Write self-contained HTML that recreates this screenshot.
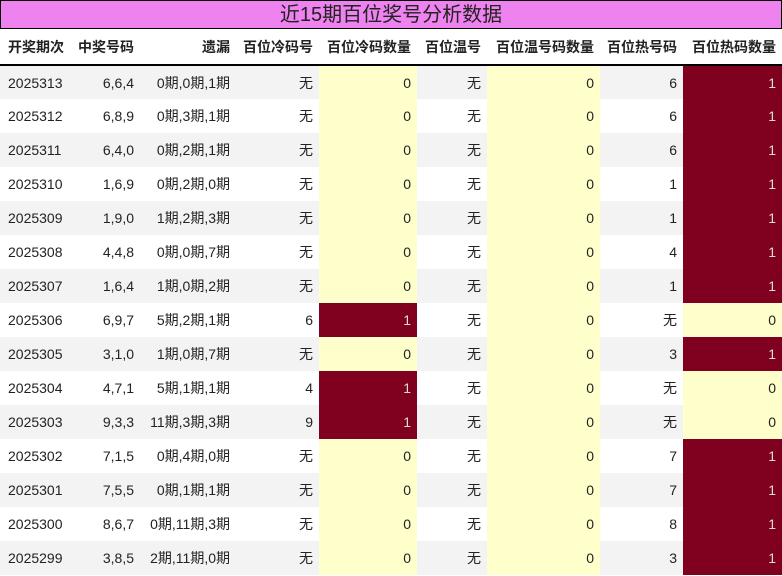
<!DOCTYPE html>
<html><head><meta charset="utf-8"><style>
*{margin:0;padding:0;box-sizing:border-box}
body{width:782px;height:576px;background:#fff;font-family:"Liberation Sans","Noto Sans CJK SC",sans-serif;font-size:14px;color:#222;overflow:hidden}
.title{position:absolute;left:0;top:0;width:782px;height:29px;background:#ee82ee;border:1px solid #000;text-align:center;font-size:20px;line-height:28px;color:#222}
table{position:absolute;left:0;top:29px;border-collapse:collapse;width:782px;table-layout:fixed}
th{height:36px;font-weight:bold;text-align:right;padding-right:6px;border-bottom:2px solid #000;white-space:nowrap}
td{height:34px;text-align:right;padding-right:6px;white-space:nowrap}
th:first-child,td:first-child{text-align:left;padding-left:8px}
tr.g td{background:#f3f3f3}
tr td.y{background:#ffffcc}
tr td.r{background:#800020;color:#ddd}
</style></head><body>
<div class="title">近15期百位奖号分析数据</div>
<table>
<colgroup><col style="width:72px"><col style="width:68px"><col style="width:96px"><col style="width:83px"><col style="width:98px"><col style="width:70px"><col style="width:113px"><col style="width:83px"><col style="width:99px"></colgroup>
<tr><th>开奖期次</th><th>中奖号码</th><th>遗漏</th><th>百位冷码号</th><th>百位冷码数量</th><th>百位温号</th><th>百位温号码数量</th><th>百位热号码</th><th>百位热码数量</th></tr>
<tr class="g"><td>2025313</td><td>6,6,4</td><td>0期,0期,1期</td><td>无</td><td class="y">0</td><td>无</td><td class="y">0</td><td>6</td><td class="r">1</td></tr>
<tr><td>2025312</td><td>6,8,9</td><td>0期,3期,1期</td><td>无</td><td class="y">0</td><td>无</td><td class="y">0</td><td>6</td><td class="r">1</td></tr>
<tr class="g"><td>2025311</td><td>6,4,0</td><td>0期,2期,1期</td><td>无</td><td class="y">0</td><td>无</td><td class="y">0</td><td>6</td><td class="r">1</td></tr>
<tr><td>2025310</td><td>1,6,9</td><td>0期,2期,0期</td><td>无</td><td class="y">0</td><td>无</td><td class="y">0</td><td>1</td><td class="r">1</td></tr>
<tr class="g"><td>2025309</td><td>1,9,0</td><td>1期,2期,3期</td><td>无</td><td class="y">0</td><td>无</td><td class="y">0</td><td>1</td><td class="r">1</td></tr>
<tr><td>2025308</td><td>4,4,8</td><td>0期,0期,7期</td><td>无</td><td class="y">0</td><td>无</td><td class="y">0</td><td>4</td><td class="r">1</td></tr>
<tr class="g"><td>2025307</td><td>1,6,4</td><td>1期,0期,2期</td><td>无</td><td class="y">0</td><td>无</td><td class="y">0</td><td>1</td><td class="r">1</td></tr>
<tr><td>2025306</td><td>6,9,7</td><td>5期,2期,1期</td><td>6</td><td class="r">1</td><td>无</td><td class="y">0</td><td>无</td><td class="y">0</td></tr>
<tr class="g"><td>2025305</td><td>3,1,0</td><td>1期,0期,7期</td><td>无</td><td class="y">0</td><td>无</td><td class="y">0</td><td>3</td><td class="r">1</td></tr>
<tr><td>2025304</td><td>4,7,1</td><td>5期,1期,1期</td><td>4</td><td class="r">1</td><td>无</td><td class="y">0</td><td>无</td><td class="y">0</td></tr>
<tr class="g"><td>2025303</td><td>9,3,3</td><td>11期,3期,3期</td><td>9</td><td class="r">1</td><td>无</td><td class="y">0</td><td>无</td><td class="y">0</td></tr>
<tr><td>2025302</td><td>7,1,5</td><td>0期,4期,0期</td><td>无</td><td class="y">0</td><td>无</td><td class="y">0</td><td>7</td><td class="r">1</td></tr>
<tr class="g"><td>2025301</td><td>7,5,5</td><td>0期,1期,1期</td><td>无</td><td class="y">0</td><td>无</td><td class="y">0</td><td>7</td><td class="r">1</td></tr>
<tr><td>2025300</td><td>8,6,7</td><td>0期,11期,3期</td><td>无</td><td class="y">0</td><td>无</td><td class="y">0</td><td>8</td><td class="r">1</td></tr>
<tr class="g"><td>2025299</td><td>3,8,5</td><td>2期,11期,0期</td><td>无</td><td class="y">0</td><td>无</td><td class="y">0</td><td>3</td><td class="r">1</td></tr>
</table>
</body></html>
